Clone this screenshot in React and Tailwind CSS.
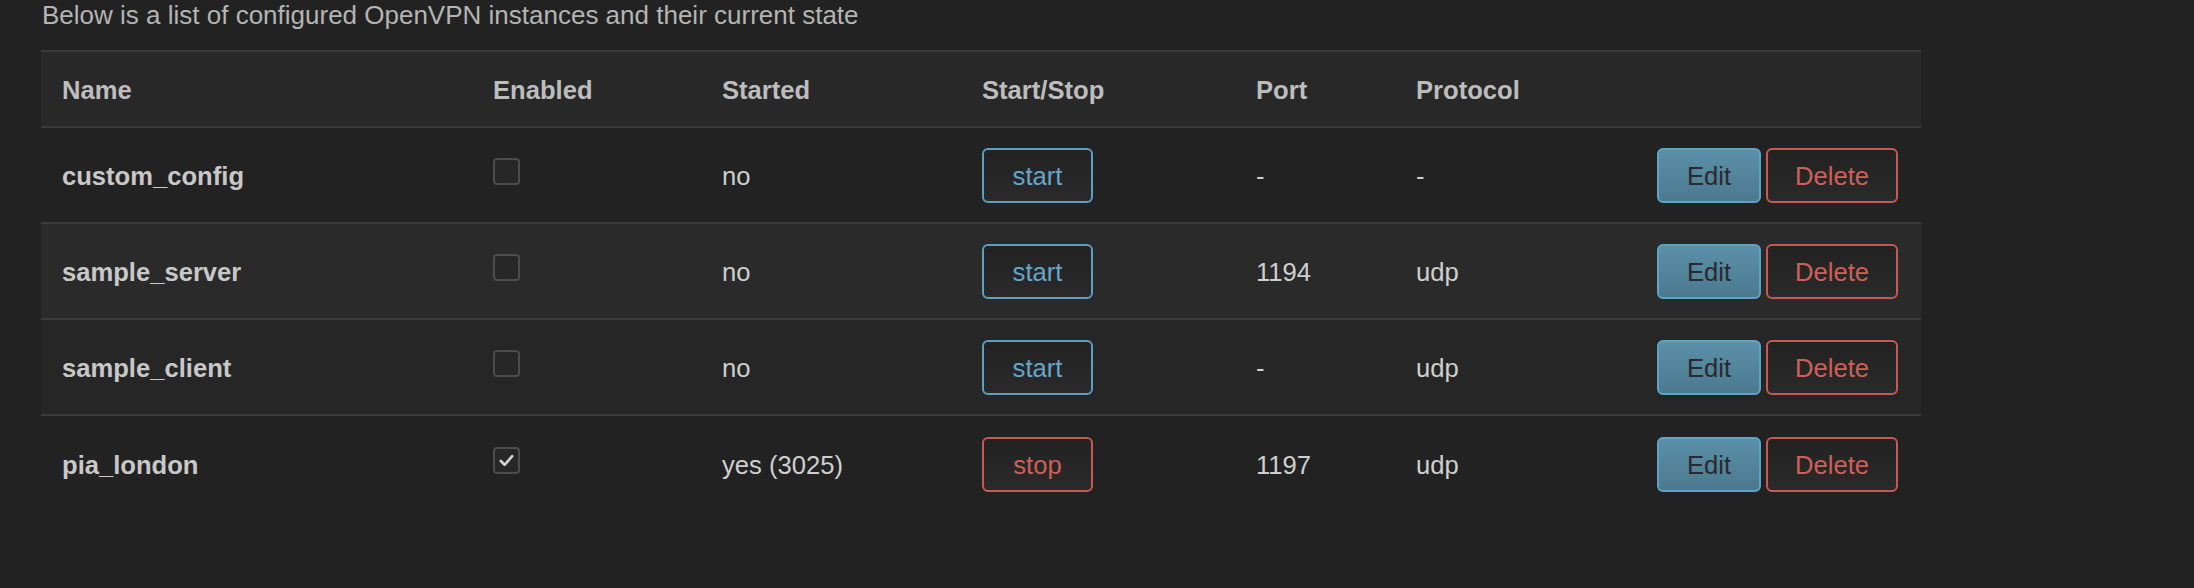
import React from "react";

const rows = [
  { name: "custom_config", enabled: false, started: "no", running: false, port: "-", proto: "-", bg: "bg-[#222222]" },
  { name: "sample_server", enabled: false, started: "no", running: false, port: "1194", proto: "udp", bg: "bg-[#2a2a2a]" },
  { name: "sample_client", enabled: false, started: "no", running: false, port: "-", proto: "udp", bg: "bg-[#262626]" },
  { name: "pia_london", enabled: true, started: "yes (3025)", running: true, port: "1197", proto: "udp", bg: "bg-[#222222]" },
];

const grid = "grid grid-cols-[431px_229px_260px_274px_160px_1fr_auto] items-center";

function Checkbox({ checked }) {
  return (
    <div className="mb-[7px] flex h-[27px] w-[27px] items-center justify-center rounded-[4px] border-2 border-[#4c4c4c] bg-[#272727]">
      {checked && (
        <svg width="19" height="19" viewBox="0 0 20 20" fill="none">
          <path d="M4 10.5l4 4L16 5.5" stroke="#d4d4d4" strokeWidth="2.8" strokeLinecap="round" strokeLinejoin="round" />
        </svg>
      )}
    </div>
  );
}

const btn = "flex h-[55px] items-center justify-center rounded-[6px] border-2 pt-[3px]";

export default function App() {
  return (
    <div className="min-h-[588px] w-full bg-[#222222] text-[#cccccc]" style={{ fontFamily: '"Liberation Sans", Arial, Helvetica, sans-serif' }}>
      <div className="pl-[41px] pr-[273px]">
        <p className="pl-[1px] text-[26px] leading-[30px] text-[#b4b4b4]">
          Below is a list of configured OpenVPN instances and their current state
        </p>
        <div className="mt-[20px] w-[1880px] text-[25.6px]">
          <div className={`${grid} h-[78px] border-y-2 border-[#3b3b3b] bg-[#282828] font-bold text-[#bdbdbd]`}>
            <div className="pl-[21px] pt-[3px]">Name</div>
            <div className="pl-[21px] pt-[3px]">Enabled</div>
            <div className="pl-[21px] pt-[3px]">Started</div>
            <div className="pl-[21px] pt-[3px]">Start/Stop</div>
            <div className="pl-[21px] pt-[3px]">Port</div>
            <div className="pl-[21px] pt-[3px]">Protocol</div>
            <div className="pr-[23px]"></div>
          </div>
          {rows.map((r, i) => (
            <div
              key={r.name}
              className={`${grid} h-[96px] ${i < rows.length - 1 ? "border-b-2 border-[#3b3b3b]" : ""} ${r.bg}`}
            >
              <div className="pl-[21px] pt-[3px] font-bold text-[#c8c8c8]">{r.name}</div>
              <div className="pl-[21px]">
                <Checkbox checked={r.enabled} />
              </div>
              <div className="pl-[21px] pt-[3px] text-[#cfcfcf]">{r.started}</div>
              <div className="pl-[21px]">
                {r.running ? (
                  <button className={`${btn} w-[111px] border-[#c65a52] bg-gradient-to-b from-[#222222] to-[#2a2a2a] text-[#cf5f58]`}>
                    stop
                  </button>
                ) : (
                  <button className={`${btn} w-[111px] border-[#5c9fc3] bg-gradient-to-b from-[#222222] to-[#2a2a2a] text-[#65a6cb]`}>
                    start
                  </button>
                )}
              </div>
              <div className="pl-[21px] pt-[3px] text-[#cfcfcf]">{r.port}</div>
              <div className="pl-[21px] pt-[3px] text-[#cfcfcf]">{r.proto}</div>
              <div className="flex gap-[5px] pr-[23px]">
                <button className={`${btn} w-[104px] border-[#5ea3c6] bg-gradient-to-b from-[#5b90a9] to-[#4b798f] text-[#2a2a2a]`}>
                  Edit
                </button>
                <button className={`${btn} w-[132px] border-[#c65a52] bg-gradient-to-b from-[#222222] to-[#2a2a2a] text-[#cf5f58]`}>
                  Delete
                </button>
              </div>
            </div>
          ))}
        </div>
      </div>
    </div>
  );
}
